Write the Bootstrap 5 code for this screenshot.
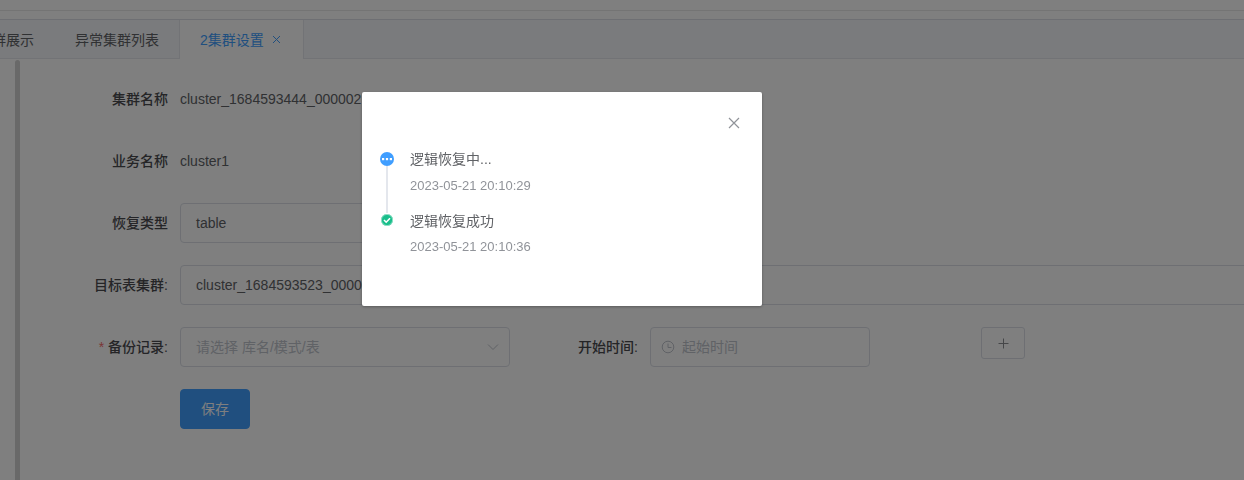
<!DOCTYPE html>
<html lang="zh">
<head>
<meta charset="utf-8">
<title>集群设置</title>
<link href="https://cdn.jsdelivr.net/npm/bootstrap@5.3.0/dist/css/bootstrap.min.css" rel="stylesheet">
<style>
html,body{height:480px;overflow:hidden;background:#fff}
body{font-family:"Liberation Sans","Noto Sans CJK SC",sans-serif;font-size:14px;color:#606266}
.topstrip{height:20px;background:#fff;border-bottom:1px solid #dcdfe6}
.topstrip-in{height:11px;border-bottom:1px solid #e8e8e8}
.tabbar{height:39px;background:#f5f7fa;border-bottom:1px solid #e4e7ed;margin-left:-42px;flex-wrap:nowrap}
.tabbar .tab-item{height:39px;line-height:38px;padding:0 20px;color:#606266;white-space:nowrap;display:flex;align-items:center}
.tabbar .tab-first{padding-right:21px}
.tabbar .tab-on{background:#fff;color:#409eff;border-left:1px solid #e4e7ed;border-right:1px solid #e4e7ed;padding:0 22px 0 20px;gap:8px}
.tab-close{width:9px;height:9px;margin-left:0}
.side-rail{width:5px;height:421px;background:#d2d2d2;border-radius:3px 3px 0 0;margin-left:15px;margin-top:1px;flex:none}
.formcol{padding-top:20px;flex:1;min-width:0}
.frow{height:40px;margin-bottom:22px;display:flex;align-items:center}
.flabel{width:160px;flex:none;text-align:right;padding-right:12px;color:#4a4b4f;font-weight:500;white-space:nowrap}
.freq{color:#f56c6c;margin-right:4px;font-weight:400}
.fval{color:#606266;white-space:nowrap}
.fbox{height:40px;border:1px solid #dcdfe6;border-radius:4px;background:#fff;padding:0 15px;display:flex;align-items:center;color:#606266;flex:none;white-space:nowrap}
.w330{width:330px}
.wide{width:1100px}
.wtime{width:220px;padding:0 10px;gap:7px}
.ph{color:#c0c4cc}
.label2{width:140px;flex:none;text-align:right;padding-right:12px;color:#4a4b4f;font-weight:500;white-space:nowrap}
.chev{margin-left:auto;margin-right:-5px}
.plusbtn{width:44px;height:32px;margin-left:111px;margin-top:-8px;border:1px solid #dcdfe6;border-radius:3px;background:#fff;display:flex;align-items:center;justify-content:center;padding:0}
.savebtn{width:70px;height:40px;background:#409eff;border-color:#409eff;color:#fff;font-size:14px;border-radius:4px;padding:0}
.dlg{width:400px;margin:92px 0 0 362px;height:214px;border:0;border-radius:2px;box-shadow:0 1px 3px rgba(0,0,0,.3);position:relative}
.dlg-close{position:absolute;left:366px;top:25px;width:12px;height:12px;display:block;line-height:0}
.tl{padding:60px 0 0 18px}
.tl-item{display:flex;height:61px;position:relative}
.tl-icon{width:14px;flex:none;display:flex;flex-direction:column;align-items:center}
.tl-line{width:2px;height:47px;background:#e4e7ed;flex:none}
.tl-text{margin-left:16px;line-height:14px}
.tl-title{color:#606266;font-size:14px;height:14px;margin-bottom:13px;line-height:14px}
.tl-item+.tl-item .tl-text{padding-top:1px}
.tl-item+.tl-item .tl-title{margin-bottom:12px}
.tl-time{color:#909399;font-size:13px;line-height:14px}
</style>
</head>
<body>
<div class="topstrip"><div class="topstrip-in"></div></div>
<div class="tabbar d-flex">
  <div class="tab-item tab-first">集群展示</div>
  <div class="tab-item">异常集群列表</div>
  <div class="tab-item tab-on">2集群设置
    <svg class="tab-close" viewBox="0 0 9 9"><path d="M1 1l7 7M8 1L1 8" stroke="#409eff" stroke-width="1" fill="none"/></svg>
  </div>
</div>
<div class="d-flex">
  <div class="side-rail"></div>
  <div class="formcol">
    <div class="frow"><div class="flabel">集群名称</div><div class="fval">cluster_1684593444_000002</div></div>
    <div class="frow"><div class="flabel">业务名称</div><div class="fval">cluster1</div></div>
    <div class="frow"><div class="flabel">恢复类型</div><div class="fbox w330">table</div></div>
    <div class="frow"><div class="flabel">目标表集群:</div><div class="fbox wide">cluster_1684593523_000002</div></div>
    <div class="frow">
      <div class="flabel"><span class="freq">*</span>备份记录:</div>
      <div class="fbox w330"><span class="ph">请选择 库名/模式/表</span>
        <svg class="chev" width="12" height="8" viewBox="0 0 12 8"><path d="M1 1.5l5 5 5-5" stroke="#c0c4cc" fill="none"/></svg>
      </div>
      <div class="label2">开始时间:</div>
      <div class="fbox wtime">
        <svg width="14" height="14" viewBox="0 0 14 14"><circle cx="7" cy="7" r="5.8" stroke="#c0c4cc" fill="none"/><path d="M7 3.5V7.5H10.5" stroke="#c0c4cc" fill="none"/></svg>
        <span class="ph">起始时间</span>
      </div>
      <button class="plusbtn btn" type="button" aria-label="添加">
        <svg width="11" height="11" viewBox="0 0 11 11"><path d="M5.5 0.5v10M0.5 5.5h10" stroke="#8a8c90" fill="none"/></svg>
      </button>
    </div>
    <div class="frow"><div class="flabel"></div><button class="btn btn-primary savebtn" type="button">保存</button></div>
  </div>
</div>
<div class="modal-backdrop fade show"></div>
<div class="modal d-block" tabindex="-1">
  <div class="modal-content dlg">
    <svg class="dlg-close" viewBox="0 0 12 12"><path d="M1 1l10 10M11 1L1 11" stroke="#909399" stroke-width="1.2" fill="none"/></svg>
    <div class="tl">
      <div class="tl-item">
        <div class="tl-icon">
          <svg width="14" height="14" viewBox="0 0 14 14"><circle cx="7" cy="7" r="7" fill="#409eff"/><rect x="2" y="6" width="2.2" height="2.2" fill="#fff"/><rect x="5.9" y="6" width="2.2" height="2.2" fill="#fff"/><rect x="9.8" y="6" width="2.2" height="2.2" fill="#fff"/></svg>
          <div class="tl-line"></div>
        </div>
        <div class="tl-text"><div class="tl-title">逻辑恢复中...</div><div class="tl-time">2023-05-21 20:10:29</div></div>
      </div>
      <div class="tl-item">
        <div class="tl-icon">
          <svg width="14" height="14" viewBox="0 0 14 14"><circle cx="7" cy="7" r="6" fill="#19be8b"/><circle cx="7" cy="7" r="5.6" fill="none" stroke="#a8e6d2" stroke-width=".8"/><path d="M4 7l2.2 2.2L10 5.2" stroke="#fff" stroke-width="1.6" fill="none"/></svg>
        </div>
        <div class="tl-text"><div class="tl-title">逻辑恢复成功</div><div class="tl-time">2023-05-21 20:10:36</div></div>
      </div>
    </div>
  </div>
</div>
</body>
</html>
